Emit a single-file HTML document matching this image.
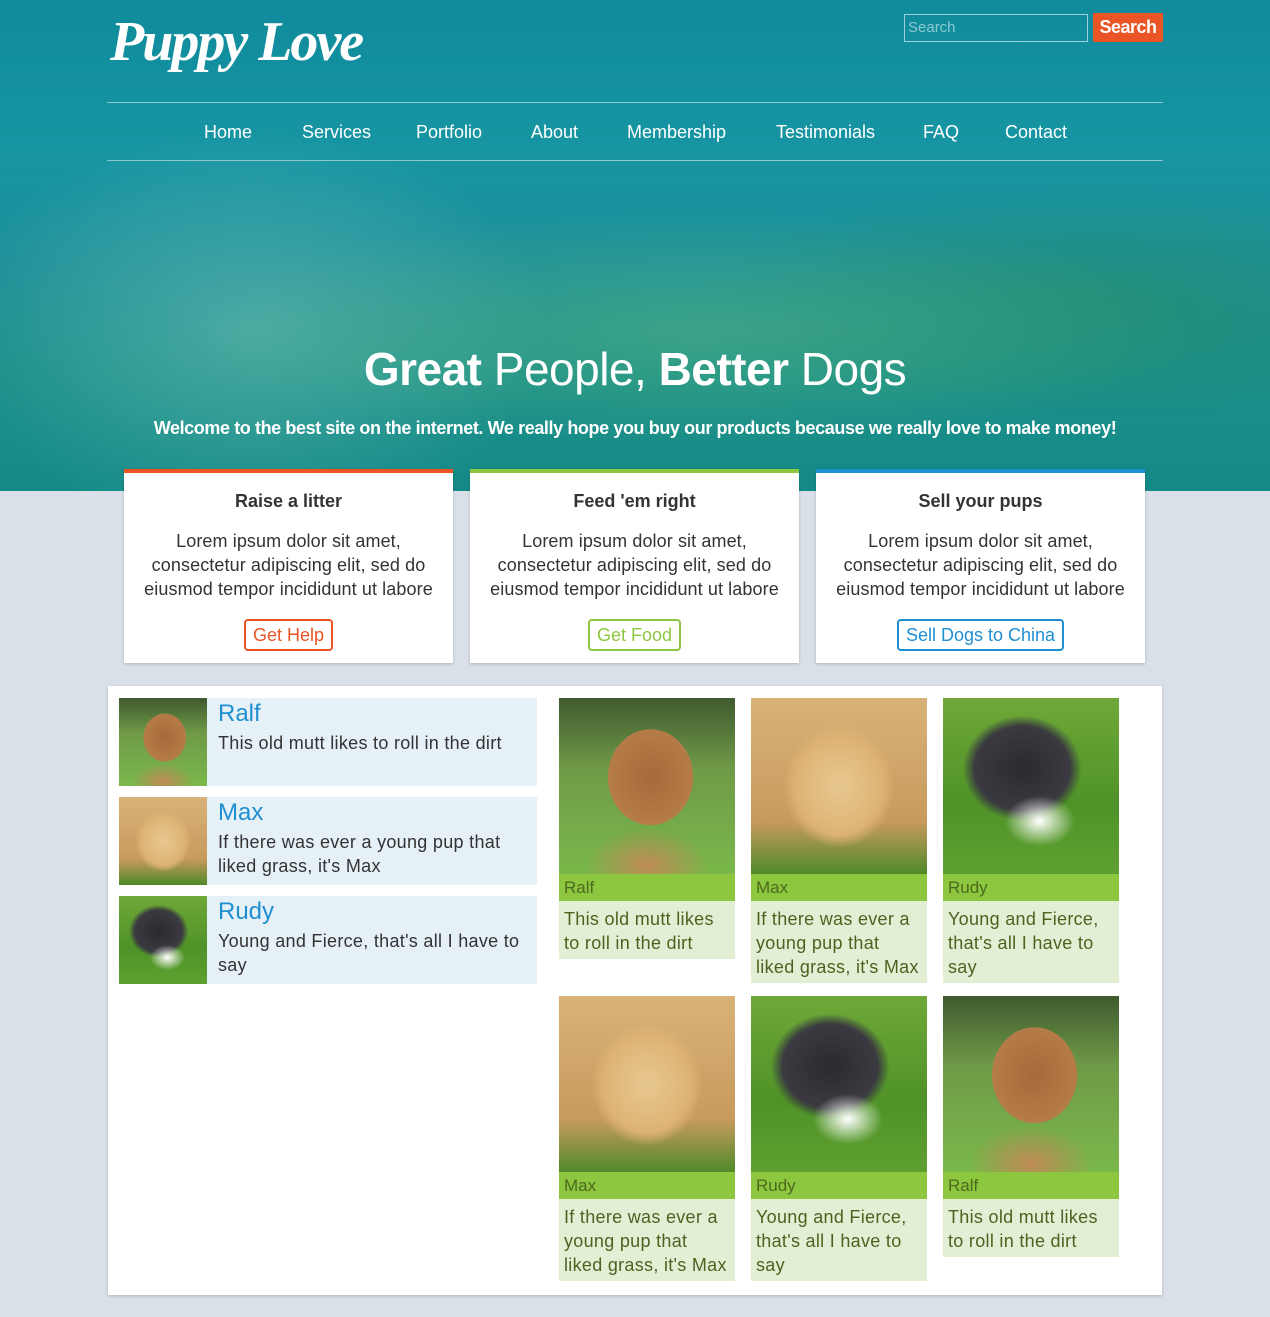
<!DOCTYPE html>
<html><head><meta charset="utf-8"><style>
*{margin:0;padding:0;box-sizing:border-box}
body{width:1270px;height:1317px;background:#d9e0e7;font-family:"Liberation Sans",sans-serif;position:relative;overflow:hidden;color:#333}
.hero{position:absolute;left:0;top:0;width:1270px;height:491px;background:
radial-gradient(ellipse 500px 120px at 700px 330px,rgba(120,200,120,.35),transparent),
radial-gradient(ellipse 300px 200px at 250px 330px,rgba(160,220,200,.35),transparent),
radial-gradient(ellipse 400px 120px at 1100px 300px,rgba(40,140,90,.45),transparent),
linear-gradient(180deg,#0f8b9b 0%,#1795a3 30%,#1d8f98 55%,#1a8f8a 75%,#148a88 100%)}
.abs{position:absolute}
.logo{left:110px;top:10px;font-family:"Liberation Serif",serif;font-style:italic;font-weight:bold;font-size:56px;color:#fff;letter-spacing:-2px}
.sin{left:904px;top:14px;width:184px;height:28px;border:1px solid #9ed0d8;color:#8cc8d0;font-size:15px;padding:4px 3px}
.sbtn{left:1093px;top:13px;width:70px;height:29px;background:#eb5424;color:#fff;font-size:18px;font-weight:bold;text-align:center;line-height:29px;letter-spacing:-.5px}
.line{left:107px;width:1056px;height:1px;background:#8fc8cc}
.nav{top:122px;font-size:18px;color:#fff}
h1{position:absolute;top:342px;left:0;width:1270px;text-align:center;font-size:46px;color:#fff;font-weight:normal;letter-spacing:-.5px}
h1 b{font-weight:bold}
.sub{top:418px;left:0;width:1270px;text-align:center;color:#fff;font-size:18px;font-weight:bold;letter-spacing:-.4px}
.card{position:absolute;top:469px;width:329px;height:194px;background:#fff;border-top:4px solid;text-align:center;box-shadow:0 1px 3px rgba(0,0,0,.2)}
.card h3{font-size:18px;margin-top:18px;color:#333}
.card p{font-size:18px;line-height:24px;margin-top:17px;color:#333;letter-spacing:.1px}
.card span{display:inline-block;margin-top:18px;border:2px solid;border-radius:4px;padding:2px 7px;font-size:18px;line-height:24px}
.panel{left:108px;top:686px;width:1054px;height:609px;background:#fff;box-shadow:0 1px 3px rgba(0,0,0,.2)}
.li{position:absolute;left:119px;width:418px;height:88px;background:#e6f0f7}
.li .im{position:absolute;left:0;top:0;width:88px;height:88px}
.li h4{position:absolute;left:99px;top:2px;font-size:24px;font-weight:normal;color:#1e8fd0}
.li p{position:absolute;left:99px;top:33px;font-size:18px;line-height:24px;color:#333;width:315px;letter-spacing:.3px;white-space:nowrap}
.g{position:absolute;width:176px;background:#e3efd5}
.g .im{height:176px}
.g .lb{height:27px;background:#8dc63f;color:#4c6a1d;font-size:17px;padding:3px 5px;line-height:22px}
.g p{padding:6px 0 4px 5px;font-size:18px;line-height:24px;color:#4a6420;letter-spacing:.3px;white-space:nowrap}
.ralf{background:radial-gradient(ellipse 40% 45% at 52% 45%,#a46a3a,#b57c48 60%,transparent 61%),radial-gradient(ellipse 50% 30% at 50% 95%,#c08a55,transparent 70%),linear-gradient(180deg,#3f5a2e 0%,#6f9a48 40%,#7ab84a 100%)}
.max{background:radial-gradient(ellipse 45% 50% at 50% 50%,#e8c890,#ddb374 55%,transparent 70%),linear-gradient(180deg,#d8b27a,#c89a5c 70%,#4f8a2a 100%)}
.rudy{background:radial-gradient(ellipse 25% 18% at 55% 70%,#fff,transparent 80%),radial-gradient(ellipse 45% 40% at 45% 40%,#2a2a30,#3a3a40 60%,transparent 75%),linear-gradient(180deg,#6fa838,#4f9228 60%,#5ea030)}
</style></head><body>
<div class="hero"></div>
<div class="abs logo">Puppy Love</div>
<div class="abs sin">Search</div>
<div class="abs sbtn">Search</div>
<div class="abs line" style="top:102px"></div>
<div class="abs line" style="top:160px"></div>
<div class="abs nav" style="left:204px">Home</div>
<div class="abs nav" style="left:302px">Services</div>
<div class="abs nav" style="left:416px">Portfolio</div>
<div class="abs nav" style="left:531px">About</div>
<div class="abs nav" style="left:627px">Membership</div>
<div class="abs nav" style="left:776px">Testimonials</div>
<div class="abs nav" style="left:923px">FAQ</div>
<div class="abs nav" style="left:1005px">Contact</div>
<h1><b>Great</b> People, <b>Better</b> Dogs</h1>
<div class="abs sub">Welcome to the best site on the internet. We really hope you buy our products because we really love to make money!</div>

<div class="card" style="left:124px;border-color:#eb5424"><h3>Raise a litter</h3><p>Lorem ipsum dolor sit amet,<br>consectetur adipiscing elit, sed do<br>eiusmod tempor incididunt ut labore</p><span style="color:#eb5424;border-color:#eb5424">Get Help</span></div>
<div class="card" style="left:470px;border-color:#8dc63f"><h3>Feed 'em right</h3><p>Lorem ipsum dolor sit amet,<br>consectetur adipiscing elit, sed do<br>eiusmod tempor incididunt ut labore</p><span style="color:#8dc63f;border-color:#8dc63f">Get Food</span></div>
<div class="card" style="left:816px;border-color:#1e8fd0"><h3>Sell your pups</h3><p>Lorem ipsum dolor sit amet,<br>consectetur adipiscing elit, sed do<br>eiusmod tempor incididunt ut labore</p><span style="color:#1e8fd0;border-color:#1e8fd0">Sell Dogs to China</span></div>

<div class="abs panel"></div>
<div class="li" style="top:698px"><div class="im ralf"></div><h4>Ralf</h4><p>This old mutt likes to roll in the dirt</p></div>
<div class="li" style="top:797px"><div class="im max"></div><h4>Max</h4><p>If there was ever a young pup that<br>liked grass, it's Max</p></div>
<div class="li" style="top:896px"><div class="im rudy"></div><h4>Rudy</h4><p>Young and Fierce, that's all I have to<br>say</p></div>

<div class="g" style="left:559px;top:698px"><div class="im ralf"></div><div class="lb">Ralf</div><p>This old mutt likes<br>to roll in the dirt</p></div>
<div class="g" style="left:751px;top:698px"><div class="im max"></div><div class="lb">Max</div><p>If there was ever a<br>young pup that<br>liked grass, it's Max</p></div>
<div class="g" style="left:943px;top:698px"><div class="im rudy"></div><div class="lb">Rudy</div><p>Young and Fierce,<br>that's all I have to<br>say</p></div>
<div class="g" style="left:559px;top:996px"><div class="im max"></div><div class="lb">Max</div><p>If there was ever a<br>young pup that<br>liked grass, it's Max</p></div>
<div class="g" style="left:751px;top:996px"><div class="im rudy"></div><div class="lb">Rudy</div><p>Young and Fierce,<br>that's all I have to<br>say</p></div>
<div class="g" style="left:943px;top:996px"><div class="im ralf"></div><div class="lb">Ralf</div><p>This old mutt likes<br>to roll in the dirt</p></div>
</body></html>
